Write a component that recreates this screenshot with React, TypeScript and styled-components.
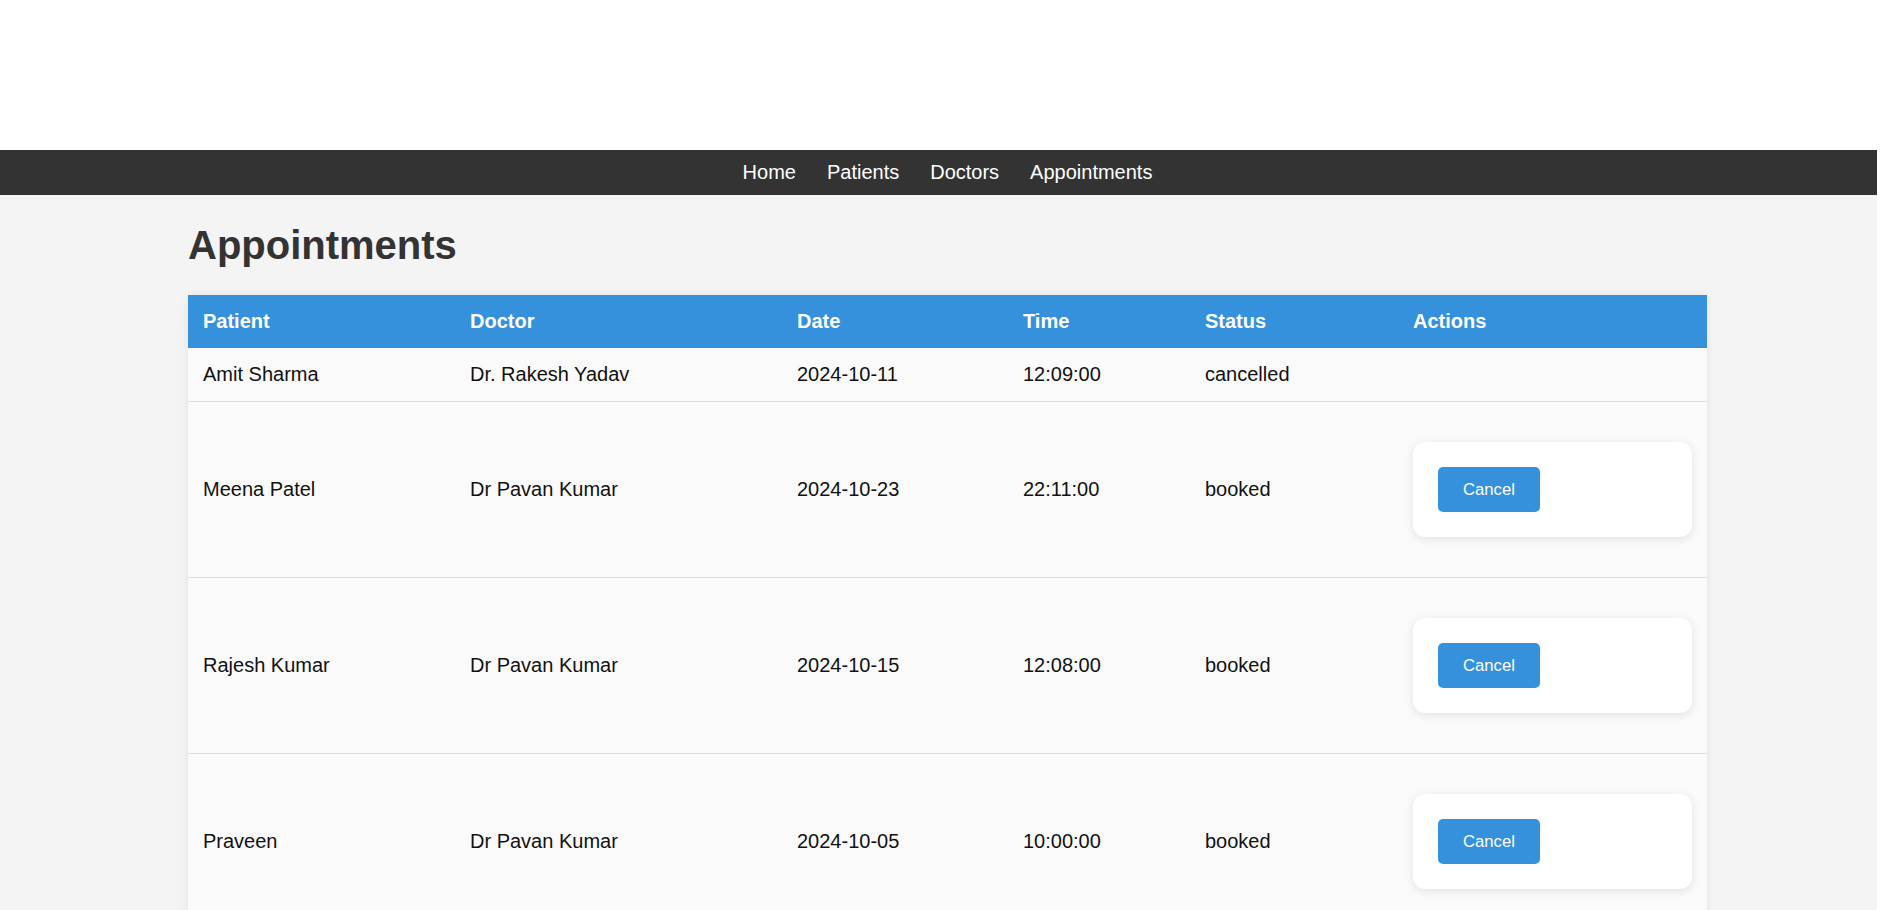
import React from 'react'
import styled, { createGlobalStyle } from 'styled-components'

type Appointment = {
  id: number
  patient: string
  doctor: string
  date: string
  time: string
  status: 'booked' | 'cancelled'
}

const appointments: Appointment[] = [
  { id: 1, patient: 'Amit Sharma', doctor: 'Dr. Rakesh Yadav', date: '2024-10-11', time: '12:09:00', status: 'cancelled' },
  { id: 2, patient: 'Meena Patel', doctor: 'Dr Pavan Kumar', date: '2024-10-23', time: '22:11:00', status: 'booked' },
  { id: 3, patient: 'Rajesh Kumar', doctor: 'Dr Pavan Kumar', date: '2024-10-15', time: '12:08:00', status: 'booked' },
  { id: 4, patient: 'Praveen', doctor: 'Dr Pavan Kumar', date: '2024-10-05', time: '10:00:00', status: 'booked' },
]

// column widths incl. padding
const columns = [
  { label: 'Patient', width: 267 },
  { label: 'Doctor', width: 327 },
  { label: 'Date', width: 226 },
  { label: 'Time', width: 182 },
  { label: 'Status', width: 208 },
  { label: 'Actions', width: 309 },
]

const GlobalStyle = createGlobalStyle`
  html, body {
    margin: 0;
    padding: 0;
    background: #fff;
  }
  body {
    font-family: "Liberation Sans", Arial, sans-serif;
  }
`

const Page = styled.div`
  margin-right: 16px;
  min-height: 910px;
  background-color: #f4f4f4;
`

const TopBanner = styled.header`
  height: 150px;
  background-color: #fff;
`

const NavBar = styled.nav`
  display: flex;
  justify-content: center;
  gap: 31px;
  padding: 11px 0 11px 18px;
  background-color: #333;
`

const NavLink = styled.a`
  color: #fff;
  font-size: 20px;
  line-height: 23px;
  text-decoration: none;
  cursor: pointer;
`

const Main = styled.main`
  padding: 0 170px 0 188px;
  overflow: hidden;
`

const Title = styled.h1`
  margin: 27px 0;
  font-size: 40px;
  line-height: 46px;
  font-weight: bold;
  color: #333;
`

const Table = styled.table`
  width: 100%;
  table-layout: fixed;
  border-collapse: collapse;
  background-color: #fafafa;
  box-shadow: 0 0 8px rgba(0, 0, 0, 0.08);
`

const HeadCell = styled.th<{ $width: number }>`
  box-sizing: border-box;
  width: ${p => p.$width}px;
  padding: 15px;
  text-align: left;
  font-size: 20px;
  line-height: 23px;
  font-weight: bold;
  color: #fff;
  background-color: #3591dc;
`

const Row = styled.tr`
  border-bottom: 1px solid #ddd;
`

const Cell = styled.td`
  padding: 15px;
  font-size: 20px;
  line-height: 23px;
  color: #111;
  vertical-align: middle;
`

const ActionCard = styled.div`
  margin: 25px 0;
  padding: 25px;
  background-color: #fff;
  border-radius: 12px;
  box-shadow: 0 2px 8px rgba(0, 0, 0, 0.1);
`

const CancelButton = styled.button`
  display: block;
  padding: 13px 25px;
  border: none;
  border-radius: 5px;
  background-color: #3591dc;
  color: #fff;
  font-family: "Liberation Sans", Arial, sans-serif;
  font-size: 16.67px;
  line-height: 19px;
  cursor: pointer;
`

const App = () => {
  return (
    <>
      <GlobalStyle />
      <Page>
        <TopBanner />
        <NavBar>
          <NavLink>Home</NavLink>
          <NavLink>Patients</NavLink>
          <NavLink>Doctors</NavLink>
          <NavLink>Appointments</NavLink>
        </NavBar>
        <Main>
          <Title>Appointments</Title>
          <Table>
            <thead>
              <tr>
                {columns.map(c => (
                  <HeadCell key={c.label} $width={c.width}>{c.label}</HeadCell>
                ))}
              </tr>
            </thead>
            <tbody>
              {appointments.map(a => (
                <Row key={a.id}>
                  <Cell>{a.patient}</Cell>
                  <Cell>{a.doctor}</Cell>
                  <Cell>{a.date}</Cell>
                  <Cell>{a.time}</Cell>
                  <Cell>{a.status}</Cell>
                  <Cell>
                    {a.status === 'booked' && (
                      <ActionCard>
                        <CancelButton>Cancel</CancelButton>
                      </ActionCard>
                    )}
                  </Cell>
                </Row>
              ))}
            </tbody>
          </Table>
        </Main>
      </Page>
    </>
  )
}

export default App
